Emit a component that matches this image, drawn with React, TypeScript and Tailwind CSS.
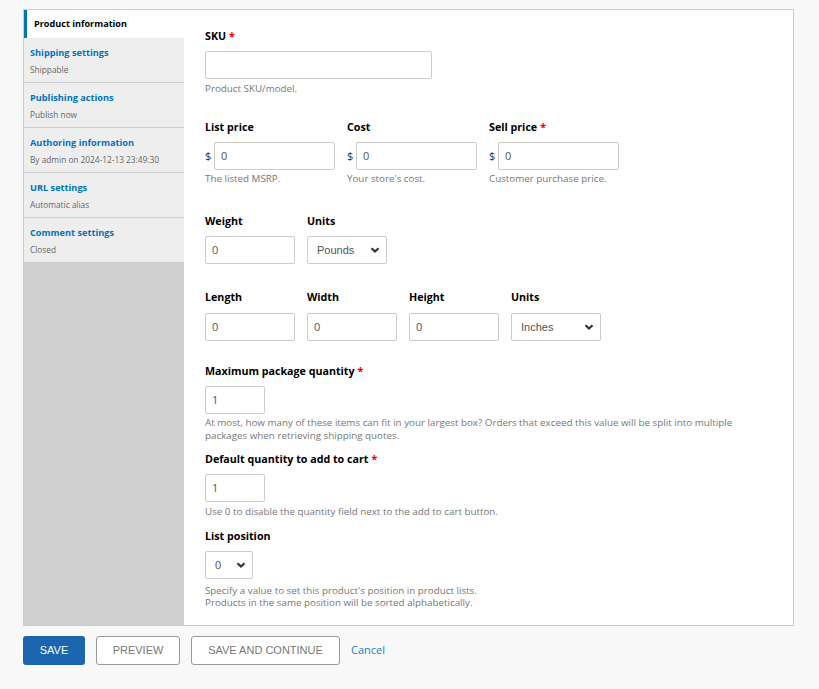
import React from 'react';

const tabs = [
  { title: 'Shipping settings', summary: 'Shippable' },
  { title: 'Publishing actions', summary: 'Publish now' },
  { title: 'Authoring information', summary: 'By admin on 2024-12-13 23:49:30' },
  { title: 'URL settings', summary: 'Automatic alias' },
  { title: 'Comment settings', summary: 'Closed' },
];

const Req = () => <span className="text-[#e00] ml-[3px]">*</span>;

const Label = ({ children, req }: { children: React.ReactNode; req?: boolean }) => (
  <div className="h-4 leading-4 text-[10.7px] font-bold text-black">
    {children}
    {req && <Req />}
  </div>
);

const Desc = ({ children }: { children: React.ReactNode }) => (
  <div className="text-[9.8px] leading-[12px] text-[#777]">{children}</div>
);

const TextInput = ({ value, w }: { value?: string; w: string }) => (
  <div
    className={`${w} h-[28px] border border-[#ccc] rounded-[2px] bg-white flex items-center px-[6px] text-[11px] text-[#555]`}
  >
    {value}
  </div>
);

const Select = ({ value, w }: { value: string; w: string }) => (
  <div
    className={`${w} h-[28px] border border-[#ccc] rounded-[2px] bg-white flex items-center justify-between pl-[9px] pr-[6px] text-[11px] text-[#555]`}
    style={{ fontFamily: '"Liberation Sans", Arial, sans-serif' }}
  >
    <span>{value}</span>
    <svg width="10" height="8" viewBox="0 0 10 8">
      <path d="M1.5 2.2 L5 5.5 L8.5 2.2" fill="none" stroke="#333" strokeWidth="2.2" />
    </svg>
  </div>
);

const PriceField = ({ label, desc, req }: { label: string; desc: string; req?: boolean }) => (
  <div className="w-[130px]">
    <Label req={req}>{label}</Label>
    <div className="mt-[7px] flex items-center gap-[3px]">
      <span className="text-[11px] text-[#333] w-[6px]">$</span>
      <TextInput value="0" w="w-[122px]" />
    </div>
    <div className="mt-[3px]">
      <Desc>{desc}</Desc>
    </div>
  </div>
);

export default function App() {
  return (
    <div className="min-h-[689px] bg-[#f8f8f8] pt-[9px] pl-[23px] pr-[25px]" style={{ fontFamily: '"Open Sans", sans-serif' }}>
      <div className="flex border border-[#ccc] bg-white">
        <div className="w-[160px] bg-[#cfcfcf] shrink-0">
          <div className="h-[28px] bg-white border-l-[3px] border-[#0074bd] flex items-center pl-[7px] text-[9.1px] font-bold text-black">
            Product information
          </div>
          {tabs.map((t) => (
            <div key={t.title} className="h-[45px] bg-[#eeeeee] border-b border-[#ccc] pl-[6px] pt-[8px]">
              <div className="text-[9.2px] font-bold text-[#0074bd] leading-[14px]">{t.title}</div>
              <div className="text-[8.3px] text-[#666] leading-[12px] mt-[4px]">{t.summary}</div>
            </div>
          ))}
        </div>
        <div className="flex-1 pl-[21px] pt-[18px] pb-[16px]">
          <Label req>SKU</Label>
          <div className="mt-[7px]">
            <TextInput w="w-[227px]" />
          </div>
          <div className="mt-[4px]">
            <Desc>Product SKU/model.</Desc>
          </div>

          <div className="mt-[24px] flex gap-[12px]">
            <PriceField label="List price" desc="The listed MSRP." />
            <PriceField label="Cost" desc="Your store's cost." />
            <PriceField label="Sell price" desc="Customer purchase price." req />
          </div>

          <div className="mt-[28px] flex gap-[12px]">
            <div>
              <Label>Weight</Label>
              <div className="mt-[7px]">
                <TextInput value="0" w="w-[90px]" />
              </div>
            </div>
            <div>
              <Label>Units</Label>
              <div className="mt-[7px]">
                <Select value="Pounds" w="w-[80px]" />
              </div>
            </div>
          </div>

          <div className="mt-[25px] flex gap-[12px]">
            {['Length', 'Width', 'Height'].map((l) => (
              <div key={l}>
                <Label>{l}</Label>
                <div className="mt-[8px]">
                  <TextInput value="0" w="w-[90px]" />
                </div>
              </div>
            ))}
            <div>
              <Label>Units</Label>
              <div className="mt-[8px]">
                <Select value="Inches" w="w-[90px]" />
              </div>
            </div>
          </div>

          <div className="mt-[22px]">
            <Label req>Maximum package quantity</Label>
            <div className="mt-[7px]">
              <TextInput value="1" w="w-[60px]" />
            </div>
            <div className="mt-[2px] text-[9.8px] leading-[13px] text-[#777] max-w-[535px]">
              At most, how many of these items can fit in your largest box? Orders that exceed this value will be split into multiple packages when retrieving shipping quotes.
            </div>
          </div>

          <div className="mt-[9px]">
            <Label req>Default quantity to add to cart</Label>
            <div className="mt-[7px]">
              <TextInput value="1" w="w-[60px]" />
            </div>
            <div className="mt-[4px]">
              <Desc>Use 0 to disable the quantity field next to the add to cart button.</Desc>
            </div>
          </div>

          <div className="mt-[10px]">
            <Label>List position</Label>
            <div className="mt-[7px]">
              <Select value="0" w="w-[48px]" />
            </div>
            <div className="mt-[6px]">
              <Desc>Specify a value to set this product's position in product lists.</Desc>
              <Desc>Products in the same position will be sorted alphabetically.</Desc>
            </div>
          </div>
        </div>
      </div>

      <div className="mt-[10px] flex items-center gap-[11px] text-[11px]" style={{ fontFamily: '"Liberation Sans", Arial, sans-serif' }}>
        <button className="h-[29px] w-[62px] rounded-[3px] bg-[#1b64ae] text-white uppercase">Save</button>
        <button className="h-[29px] w-[84px] rounded-[3px] border border-[#999] bg-white text-[#777] uppercase">Preview</button>
        <button className="h-[29px] w-[149px] rounded-[3px] border border-[#999] bg-white text-[#777] uppercase">Save and continue</button>
        <a className="text-[#1a7ec8]" style={{ fontFamily: '"Open Sans", sans-serif' }}>Cancel</a>
      </div>
    </div>
  );
}
